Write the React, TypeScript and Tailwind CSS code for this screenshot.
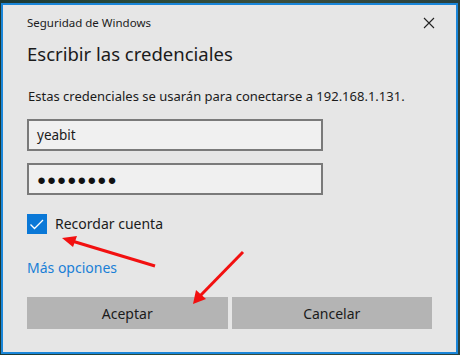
import React from "react";

export default function App() {
  const font = { fontFamily: '"Noto Sans", "Open Sans", sans-serif' };
  return (
    <div
      className="relative w-[460px] h-[355px] overflow-hidden bg-[linear-gradient(90deg,#1d3a36_0%,#2a4a3a_30%,#3c4e3c_60%,#29413f_100%)] pt-[3px] pl-[1px]"
      style={font}
    >
      <div className="w-[457px] h-[351px] border-2 border-[#1a86d9] bg-[#e6e6e6] flex flex-col px-[24px]">
        <div className="flex items-center justify-between h-[34px] pt-[2px]">
          <span className="text-[11.5px] text-[#1b1b1b]">Seguridad de Windows</span>
          <svg width="12" height="12" viewBox="0 0 12 12" className="mr-[-3px]">
            <path d="M1 1 L11 11 M11 1 L1 11" stroke="#222" strokeWidth="1.1" />
          </svg>
        </div>
        <div className="text-[18.5px] leading-[26px] text-[#1b1b1b] mt-[2px]">Escribir las credenciales</div>
        <div className="text-[13px] leading-[20px] text-[#1b1b1b] mt-[19px] pl-[1px] whitespace-nowrap">
          Estas credenciales se usarán para conectarse a 192.168.1.131.
        </div>
        <div className="mt-[13px] w-[296px] h-[32px] border-2 border-[#7a7a7a] bg-[#f0f0f0] flex items-center pl-[8px] text-[13.5px] text-[#1b1b1b]">
          yeabit
        </div>
        <div className="mt-[12px] w-[296px] h-[32px] border-2 border-[#7a7a7a] bg-[#f0f0f0] flex items-center pl-[8px] text-[15px] tracking-[1px] text-[#111]">
          ●●●●●●●●
        </div>
        <div className="mt-[18px] flex items-center gap-[8px]">
          <div className="w-[20px] h-[20px] bg-[#0a78d7] flex items-center justify-center">
            <svg width="18" height="18" viewBox="0 0 18 18">
              <path d="M2.5 9.5 L6.5 13.5 L15 5" stroke="#fff" strokeWidth="1.3" fill="none" />
            </svg>
          </div>
          <span className="text-[14px] text-[#1b1b1b]">Recordar cuenta</span>
        </div>
        <div className="mt-[23px] text-[14px] text-[#1a7fd6]">Más opciones</div>
        <div className="mt-[19px] flex gap-[4px]">
          <div className="w-[201px] h-[32px] bg-[#b4b4b4] flex items-center justify-center text-[14px] text-[#1b1b1b]">Aceptar</div>
          <div className="w-[201px] h-[32px] bg-[#b4b4b4] flex items-center justify-center text-[14px] text-[#1b1b1b]">Cancelar</div>
        </div>
      </div>
      <svg className="absolute left-0 top-0" width="460" height="355" viewBox="0 0 460 355">
        <line x1="155" y1="266" x2="72" y2="241" stroke="#f21010" strokeWidth="3" />
        <polygon points="62,238 77,236 73,247" fill="#f21010" />
        <line x1="243" y1="252" x2="200" y2="296" stroke="#f21010" strokeWidth="3" />
        <polygon points="193,304 196,290 206,299" fill="#f21010" />
      </svg>
    </div>
  );
}
